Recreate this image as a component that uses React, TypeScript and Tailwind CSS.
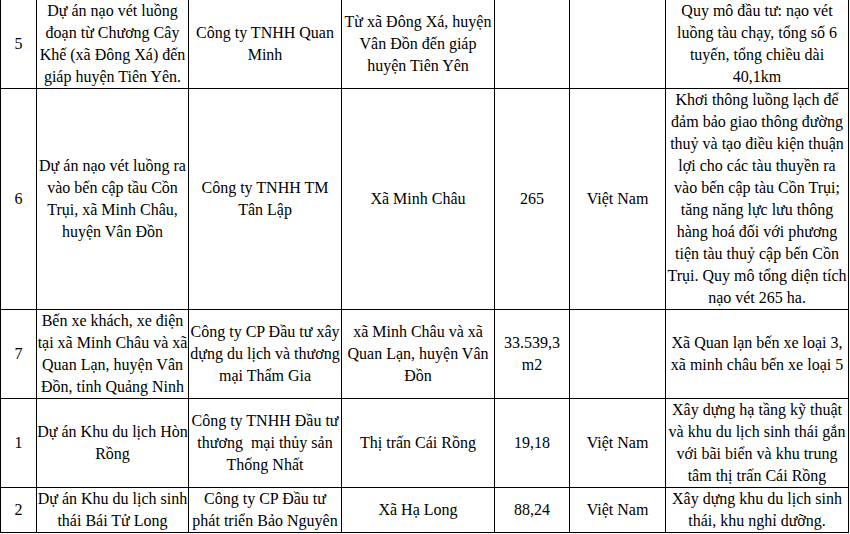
import React from 'react';

type Row = string[][];

const rows: Row[] = [
  [
    ['5'],
    ['Dự án nạo vét luồng', 'đoạn từ Chương Cây', 'Khế (xã Đông Xá) đến', 'giáp huyện Tiên Yên.'],
    ['Công ty TNHH Quan', 'Minh'],
    ['Từ xã Đông Xá, huyện', 'Vân Đồn đến giáp', 'huyện Tiên Yên'],
    [],
    [],
    ['Quy mô đầu tư: nạo vét', 'luồng tàu chạy, tổng số 6', 'tuyến, tổng chiều dài', '40,1km'],
  ],
  [
    ['6'],
    ['Dự án nạo vét luồng ra', 'vào bến cập tầu Cồn', 'Trụi, xã Minh Châu,', 'huyện Vân Đồn'],
    ['Công ty TNHH TM', 'Tân Lập'],
    ['Xã Minh Châu'],
    ['265'],
    ['Việt Nam'],
    [
      'Khơi thông luồng lạch để',
      'đảm bảo giao thông đường',
      'thuỷ và tạo điều kiện thuận',
      'lợi cho các tàu thuyền ra',
      'vào bến cập tàu Cồn Trụi;',
      'tăng năng lực lưu thông',
      'hàng hoá đối với phương',
      'tiện tàu thuỷ cập bến Cồn',
      'Trụi. Quy mô tổng diện tích',
      'nạo vét 265 ha.',
    ],
  ],
  [
    ['7'],
    ['Bến xe khách, xe điện', 'tại xã Minh Châu và xã', 'Quan Lạn, huyện Vân', 'Đồn, tỉnh Quảng Ninh'],
    ['Công ty CP Đầu tư xây', 'dựng du lịch và thương', 'mại Thẩm Gia'],
    ['xã Minh Châu và xã', 'Quan Lạn, huyện Vân', 'Đồn'],
    ['33.539,3', 'm2'],
    [],
    ['Xã Quan lạn bến xe loại 3,', 'xã minh châu bến xe loại 5'],
  ],
  [
    ['1'],
    ['Dự án Khu du lịch Hòn', 'Rồng'],
    ['Công ty TNHH Đầu tư', 'thương\u00a0 mại thủy sản', 'Thống Nhất'],
    ['Thị trấn Cái Rồng'],
    ['19,18'],
    ['Việt Nam'],
    ['Xây dựng hạ tầng kỹ thuật', 'và khu du lịch sinh thái gắn', 'với bãi biển và khu trung', 'tâm thị trấn Cái Rồng'],
  ],
  [
    ['2'],
    ['Dự án Khu du lịch sinh', 'thái Bái Tử Long'],
    ['Công ty CP Đầu tư', 'phát triển Bảo Nguyên'],
    ['Xã Hạ Long'],
    ['88,24'],
    ['Việt Nam'],
    ['Xây dựng khu du lịch sinh', 'thái, khu nghỉ dưỡng.'],
  ],
];

const colWidths = ['w-[36px]', 'w-[152px]', 'w-[153px]', 'w-[153px]', 'w-[75px]', 'w-[96px]', 'w-[183px]'];

export default function App() {
  return (
    <div className="w-[850px] h-[534px] overflow-hidden bg-white text-black [font-family:'Liberation_Serif','Times_New_Roman',serif] text-[16px] leading-[22px]">
      <table className="table-fixed border-collapse w-[849px] -mt-px">
        <colgroup>
          {colWidths.map((w, i) => (
            <col key={i} className={w} />
          ))}
        </colgroup>
        <tbody>
          {rows.map((row, r) => (
            <tr key={r}>
              {row.map((lines, c) => (
                <td key={c} className="border border-black p-0 text-center align-middle whitespace-nowrap overflow-visible">
                  {lines.map((l, i) => (
                    <div key={i}>{l}</div>
                  ))}
                </td>
              ))}
            </tr>
          ))}
        </tbody>
      </table>
    </div>
  );
}
